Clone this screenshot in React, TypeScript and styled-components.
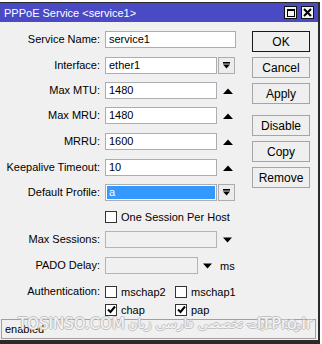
import React from 'react';
import styled, { createGlobalStyle } from 'styled-components';

const GlobalStyle = createGlobalStyle`
  html, body {
    margin: 0;
    padding: 0;
    background: #fff;
  }

  body {
    font-family: "Liberation Sans", Arial, sans-serif;
    font-size: 11px;
    color: #000;
  }
`;

const Screen = styled.div`
  position: relative;
  width: 322px;
  height: 344px;
  padding-top: 2px;
  box-sizing: border-box;
  overflow: hidden;
  background: #fff;
`;

const Window = styled.div`
  width: 320px;
  height: 342px;
  box-sizing: border-box;
  display: flex;
  flex-direction: column;
  background: #f0f0f0;
  border-top: 1px solid #2a2a2a;
  border-right: 2px solid #2a2a2a;
  border-bottom: 4px solid #2a2a2a;
`;

const TitleBar = styled.div`
  height: 19px;
  flex-shrink: 0;
  display: flex;
  align-items: center;
  justify-content: space-between;
  padding: 0 4px 0 4px;
  background: #4a4ac4;
  color: #fff;
  font-size: 11px;
`;

const TitleButtons = styled.div`
  display: flex;
  gap: 4px;
`;

const TitleButton = styled.div`
  width: 13px;
  height: 13px;
  box-sizing: border-box;
  display: flex;
  align-items: center;
  justify-content: center;
  background: #f4f4f4;
  border: 1px solid #111;
`;

const MaxGlyph = styled.div`
  width: 8px;
  height: 8px;
  box-sizing: border-box;
  border: 1px solid #000;
  border-top-width: 2px;
`;

const Body = styled.div`
  flex: 1;
  display: flex;
  flex-direction: column;
`;

const Main = styled.div`
  display: flex;
  padding-top: 9px;
`;

const Form = styled.div`
  width: 252px;
  display: flex;
  flex-direction: column;
`;

const Row = styled.div<{ $h: number }>`
  height: ${(p) => p.$h}px;
  display: grid;
  grid-template-columns: 100px 1fr;
  column-gap: 5px;
  align-items: start;
`;

const Label = styled.div`
  text-align: right;
  line-height: 17px;
  white-space: nowrap;
`;

const Field = styled.div`
  display: flex;
  align-items: center;
  height: 17px;
`;

const Input = styled.div<{ $w: number; $disabled?: boolean }>`
  width: ${(p) => p.$w}px;
  height: 17px;
  box-sizing: border-box;
  padding-left: 3px;
  line-height: 15px;
  white-space: nowrap;
  background: ${(p) => (p.$disabled ? '#f0f0f0' : '#fff')};
  border: 1px solid ${(p) => (p.$disabled ? '#b4b4b4' : '#abadb3')};
`;

const SelectedInput = styled.div`
  width: 112px;
  height: 17px;
  box-sizing: border-box;
  padding: 1px;
  background: #fff;
  border: 1px solid #abadb3;
`;

const Selection = styled.div`
  height: 13px;
  padding-left: 2px;
  line-height: 13px;
  background: #3399ff;
  color: #fff;
`;

const DropButton = styled.div`
  width: 17px;
  height: 17px;
  margin-left: 1px;
  box-sizing: border-box;
  display: flex;
  align-items: center;
  justify-content: center;
  background: #ececec;
  border: 1px solid #adadad;
`;

const ArrowSlot = styled.div<{ $ml: number }>`
  display: flex;
  align-items: center;
  margin-left: ${(p) => p.$ml}px;
`;

const Unit = styled.span`
  margin-left: 8px;
`;

const CheckLine = styled.label<{ $w?: number }>`
  display: flex;
  align-items: center;
  gap: 4px;
  width: ${(p) => (p.$w ? `${p.$w}px` : 'auto')};
  height: 17px;
  white-space: nowrap;
`;

const Box = styled.span`
  width: 12px;
  height: 12px;
  box-sizing: border-box;
  display: inline-flex;
  align-items: center;
  justify-content: center;
  background: #fff;
  border: 1px solid #333;
`;

const Buttons = styled.div`
  display: flex;
  flex-direction: column;
  gap: 5px;
`;

const Button = styled.div<{ $default?: boolean; $spaced?: boolean }>`
  width: 58px;
  height: 21px;
  box-sizing: border-box;
  display: flex;
  align-items: center;
  justify-content: center;
  margin-top: ${(p) => (p.$spaced ? 6 : 0)}px;
  background: #efefef;
  border: 1px solid ${(p) => (p.$default ? '#1a1a1a' : '#a5a5a5')};
  font-size: 12px;
`;

const StatusBar = styled.div`
  margin: auto 2px 2px 1px;
  height: 20px;
  box-sizing: border-box;
  padding-left: 3px;
  line-height: 18px;
  border: 1px solid #a0a0a0;
  font-size: 11px;
`;

const Watermark = styled.div<{ $left: number; $top: number; $size: number }>`
  position: absolute;
  left: ${(p) => p.$left}px;
  top: ${(p) => p.$top}px;
  font-family: "DejaVu Sans", "Liberation Sans", sans-serif;
  font-size: ${(p) => p.$size}px;
  color: rgba(255, 255, 255, 0.85);
  text-shadow: 1px 0 #c2c2c2, -1px 0 #c2c2c2, 0 1px #c2c2c2, 0 -1px #c2c2c2;
  white-space: nowrap;
  pointer-events: none;
`;

const DropIcon = () => (
  <svg width="9" height="9" viewBox="0 0 9 9">
    <rect x="1" y="1" width="7" height="1.6" fill="#000" />
    <path d="M1 3.6 H8 L4.5 7.6 Z" fill="#000" />
  </svg>
);

const UpArrow = () => (
  <svg width="10" height="6" viewBox="0 0 10 6">
    <path d="M0 6 L5 0.5 L10 6 Z" fill="#000" />
  </svg>
);

const DownArrow = () => (
  <svg width="9" height="6" viewBox="0 0 9 6">
    <path d="M0 0.5 H9 L4.5 5.5 Z" fill="#000" />
  </svg>
);

const CloseIcon = () => (
  <svg width="9" height="9" viewBox="0 0 9 9">
    <path d="M1 1 L8 8 M8 1 L1 8" stroke="#000" strokeWidth="2" />
  </svg>
);

const CheckMark = () => (
  <svg width="9" height="9" viewBox="0 0 9 9">
    <path d="M1 4.5 L3.5 7 L8 1.5" stroke="#000" strokeWidth="2" fill="none" />
  </svg>
);

const Check = ({ checked, label, w }: { checked?: boolean; label: string; w?: number }) => (
  <CheckLine $w={w}>
    <Box>{checked && <CheckMark />}</Box>
    {label}
  </CheckLine>
);

const App = () => {
  return (
    <>
      <GlobalStyle />
      <Screen>
        <Window>
          <TitleBar>
            <span>PPPoE Service &lt;service1&gt;</span>
            <TitleButtons>
              <TitleButton>
                <MaxGlyph />
              </TitleButton>
              <TitleButton>
                <CloseIcon />
              </TitleButton>
            </TitleButtons>
          </TitleBar>
          <Body>
            <Main>
              <Form>
                <Row $h={26}>
                  <Label>Service Name:</Label>
                  <Field>
                    <Input $w={131}>service1</Input>
                  </Field>
                </Row>
                <Row $h={25}>
                  <Label>Interface:</Label>
                  <Field>
                    <Input $w={112}>ether1</Input>
                    <DropButton>
                      <DropIcon />
                    </DropButton>
                  </Field>
                </Row>
                <Row $h={25}>
                  <Label>Max MTU:</Label>
                  <Field>
                    <Input $w={112}>1480</Input>
                    <ArrowSlot $ml={6}>
                      <UpArrow />
                    </ArrowSlot>
                  </Field>
                </Row>
                <Row $h={26}>
                  <Label>Max MRU:</Label>
                  <Field>
                    <Input $w={112}>1480</Input>
                    <ArrowSlot $ml={6}>
                      <UpArrow />
                    </ArrowSlot>
                  </Field>
                </Row>
                <Row $h={26}>
                  <Label>MRRU:</Label>
                  <Field>
                    <Input $w={112}>1600</Input>
                    <ArrowSlot $ml={6}>
                      <UpArrow />
                    </ArrowSlot>
                  </Field>
                </Row>
                <Row $h={25}>
                  <Label>Keepalive Timeout:</Label>
                  <Field>
                    <Input $w={112}>10</Input>
                    <ArrowSlot $ml={6}>
                      <UpArrow />
                    </ArrowSlot>
                  </Field>
                </Row>
                <Row $h={24}>
                  <Label>Default Profile:</Label>
                  <Field>
                    <SelectedInput>
                      <Selection>a</Selection>
                    </SelectedInput>
                    <DropButton>
                      <DropIcon />
                    </DropButton>
                  </Field>
                </Row>
                <Row $h={23}>
                  <Label />
                  <Check label="One Session Per Host" />
                </Row>
                <Row $h={26}>
                  <Label>Max Sessions:</Label>
                  <Field>
                    <Input $w={112} $disabled />
                    <ArrowSlot $ml={6}>
                      <DownArrow />
                    </ArrowSlot>
                  </Field>
                </Row>
                <Row $h={26}>
                  <Label>PADO Delay:</Label>
                  <Field>
                    <Input $w={93} $disabled />
                    <ArrowSlot $ml={5}>
                      <DownArrow />
                    </ArrowSlot>
                    <Unit>ms</Unit>
                  </Field>
                </Row>
                <Row $h={18}>
                  <Label>Authentication:</Label>
                  <Field>
                    <Check label="mschap2" w={70} />
                    <Check label="mschap1" />
                  </Field>
                </Row>
                <Row $h={18}>
                  <Label />
                  <Field>
                    <Check label="chap" checked w={70} />
                    <Check label="pap" checked />
                  </Field>
                </Row>
              </Form>
              <Buttons>
                <Button $default>OK</Button>
                <Button>Cancel</Button>
                <Button>Apply</Button>
                <Button $spaced>Disable</Button>
                <Button>Copy</Button>
                <Button>Remove</Button>
              </Buttons>
            </Main>
            <StatusBar>enabled</StatusBar>
          </Body>
        </Window>
        <Watermark $left={18} $top={315} $size={15}>
          TOSINSO.COM
        </Watermark>
        <Watermark $left={128} $top={316} $size={13} dir="rtl">
          وب سایت تخصصی فارسی زبان
        </Watermark>
        <Watermark $left={246} $top={314} $size={16}>
          - ITPro.ir
        </Watermark>
      </Screen>
    </>
  );
};

export default App;
